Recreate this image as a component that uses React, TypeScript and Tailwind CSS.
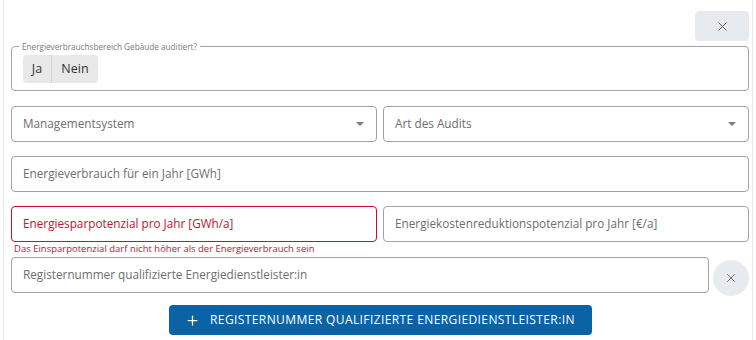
import { X, Plus } from 'lucide-react';

const font = { fontFamily: '"Open Sans", "Liberation Sans", sans-serif' };

function Caret() {
	return (
		<svg width="8" height="4" viewBox="0 0 8 4" className="shrink-0">
			<path d="M0 0 L8 0 L4 4 Z" fill="#7d7d7d" />
		</svg>
	);
}

function SelectField({ label }: { label: string }) {
	return (
		<div className="flex h-[36px] flex-1 items-center justify-between rounded border border-[#a3a3a3] pl-[11px] pr-[12px]">
			<span className="text-[11.75px] text-[#6e6e6e]">{label}</span>
			<Caret />
		</div>
	);
}

function TextField({ label, error = false }: { label: string; error?: boolean }) {
	return (
		<div
			className={
				error
					? 'flex h-[36px] flex-1 items-center rounded border border-[#c8102e] pl-[11px]'
					: 'flex h-[36px] flex-1 items-center rounded border border-[#a3a3a3] pl-[11px]'
			}
		>
			<span className={error ? 'text-[11.75px] text-[#c8102e]' : 'text-[11.75px] text-[#6e6e6e]'}>{label}</span>
		</div>
	);
}

export default function App() {
	return (
		<div className="h-[340px] w-[756px] overflow-hidden bg-white" style={font}>
			<div className="ml-[3px] flex h-full w-[750px] flex-col border-x border-[#e8e8e8] pl-[7px] pr-[3px]">
				<div className="flex justify-end pt-[11px]">
					<button className="flex h-[30px] w-[54px] items-center justify-center rounded bg-[#e7eaee] text-[#3c4048]">
						<X size={15} strokeWidth={1.3} />
					</button>
				</div>

				<fieldset className="rounded border border-[#a3a3a3] pb-[7px] pl-[11px]">
					<legend className="-ml-[4px] px-[3px] text-[8.2px] leading-[11px] text-[#7a7a7a]">
						Energieverbrauchsbereich Gebäude auditiert?
					</legend>
					<div className="mt-[3px] flex h-[28px] w-[75px] rounded bg-[#e8e8e8] text-[12.5px] text-[#333]">
						<span className="flex w-[29px] items-center justify-center border-r border-[#d2d2d2]">Ja</span>
						<span className="flex flex-1 items-center justify-center">Nein</span>
					</div>
				</fieldset>

				<div className="mt-[15px] flex gap-[6px]">
					<SelectField label="Managementsystem" />
					<SelectField label="Art des Audits" />
				</div>

				<div className="mt-[14px] flex">
					<TextField label="Energieverbrauch für ein Jahr [GWh]" />
				</div>

				<div className="mt-[14px] flex gap-[6px]">
					<TextField label="Energiesparpotenzial pro Jahr [GWh/a]" error />
					<TextField label="Energiekostenreduktionspotenzial pro Jahr [€/a]" />
				</div>
				<p className="ml-[3px] text-[9.5px] leading-[13px] text-[#c8102e]">
					Das Einsparpotenzial darf nicht höher als der Energieverbrauch sein
				</p>

				<div className="mt-[2px] flex items-start gap-[4px]">
					<TextField label="Registernummer qualifizierte Energiedienstleister:in" />
					<button className="mt-[3px] flex h-[36px] w-[36px] shrink-0 items-center justify-center rounded-full bg-[#e7eaee] text-[#444]">
						<X size={14} strokeWidth={1.3} />
					</button>
				</div>

				<div className="mt-[9px] flex justify-center">
					<button className="flex h-[30px] w-[423px] items-center justify-center gap-[10px] rounded bg-[#0b63a6] text-[12px] tracking-[0.4px] text-white">
						<Plus size={15} strokeWidth={2} />
						REGISTERNUMMER QUALIFIZIERTE ENERGIEDIENSTLEISTER:IN
					</button>
				</div>
			</div>
		</div>
	);
}
